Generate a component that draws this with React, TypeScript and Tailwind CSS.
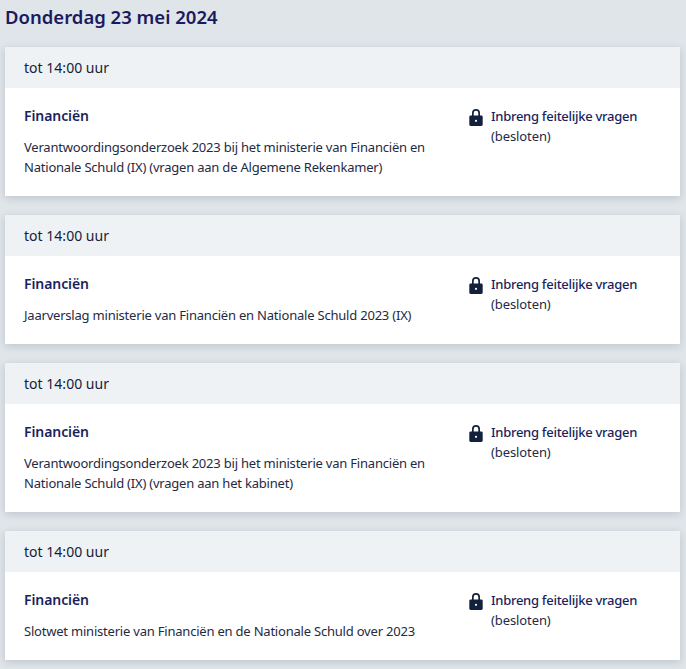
import React from "react"

const items = [
    { text: "Verantwoordingsonderzoek 2023 bij het ministerie van Financiën en Nationale Schuld (IX) (vragen aan de Algemene Rekenkamer)" },
    { text: "Jaarverslag ministerie van Financiën en Nationale Schuld 2023 (IX)" },
    { text: "Verantwoordingsonderzoek 2023 bij het ministerie van Financiën en Nationale Schuld (IX) (vragen aan het kabinet)" },
    { text: "Slotwet ministerie van Financiën en de Nationale Schuld over 2023" },
]

const Lock = () => (
    <svg width="14" height="17" viewBox="0 0 14 17" className="shrink-0">
        <path
            fill="#14213d"
            fillRule="evenodd"
            d="M3 6.500V4a4 4 0 0 1 8 0v2.500h1.300c.9 0 1.400.6 1.400 1.400v7.700c0 .9-.5 1.400-1.400 1.400H1.700c-.9 0-1.400-.5-1.400-1.400V7.900c0-.8.5-1.400 1.400-1.400H3ZM4.700 6.500h4.600V4a2.300 2.300 0 0 0-4.600 0v2.500ZM7 10.700a1.100 1.100 0 1 0 0 2.200 1.100 1.100 0 0 0 0-2.200Z"
        />
    </svg>
)

const Card = ({ text }: { text: string }) => (
    <div className="bg-white shadow-[0_2px_8px_rgba(20,30,60,0.16)]">
        <div className="h-[41px] bg-[#eef2f4] pl-[19px] flex items-center text-[14px] tracking-[0.02px] text-[#14213d]">tot 14:00 uur</div>
        <div className="flex pl-[19px] pt-[17px] pb-[18.75px]">
            <div className="w-[445px] shrink-0 pr-4">
                <div className="text-[14px] leading-[22px] font-semibold tracking-[-0.08px] text-[#1a1f5e]">Financiën</div>
                <p className="mt-[11px] text-[13px] leading-[19.5px] tracking-[-0.21px] text-[#1f2a44]">{text}</p>
            </div>
            <div className="flex gap-[8px] pt-[1px]">
                <div className="pt-[3px]"><Lock /></div>
                <div className="text-[13px] leading-[20px] tracking-[-0.1px] text-[#1f2a44]">
                    <div className="font-medium tracking-[-0.28px] text-[#1a1f5e]">Inbreng feitelijke vragen</div>
                    <div>(besloten)</div>
                </div>
            </div>
        </div>
    </div>
)

const App = () => {
    return (
        <div className="min-h-[669px] bg-[#dfe5e9] pl-[5px] pr-[6px] font-['Noto_Sans',sans-serif] overflow-hidden">
            <h1 className="h-[47px] pt-[3px] text-[18.5px] leading-[27px] font-semibold text-[#1a1a5e]">Donderdag 23 mei 2024</h1>
            <div className="flex flex-col gap-[19px]">
                {items.map((item, i) => <Card key={i} text={item.text} />)}
            </div>
        </div>
    )
}

export default App
